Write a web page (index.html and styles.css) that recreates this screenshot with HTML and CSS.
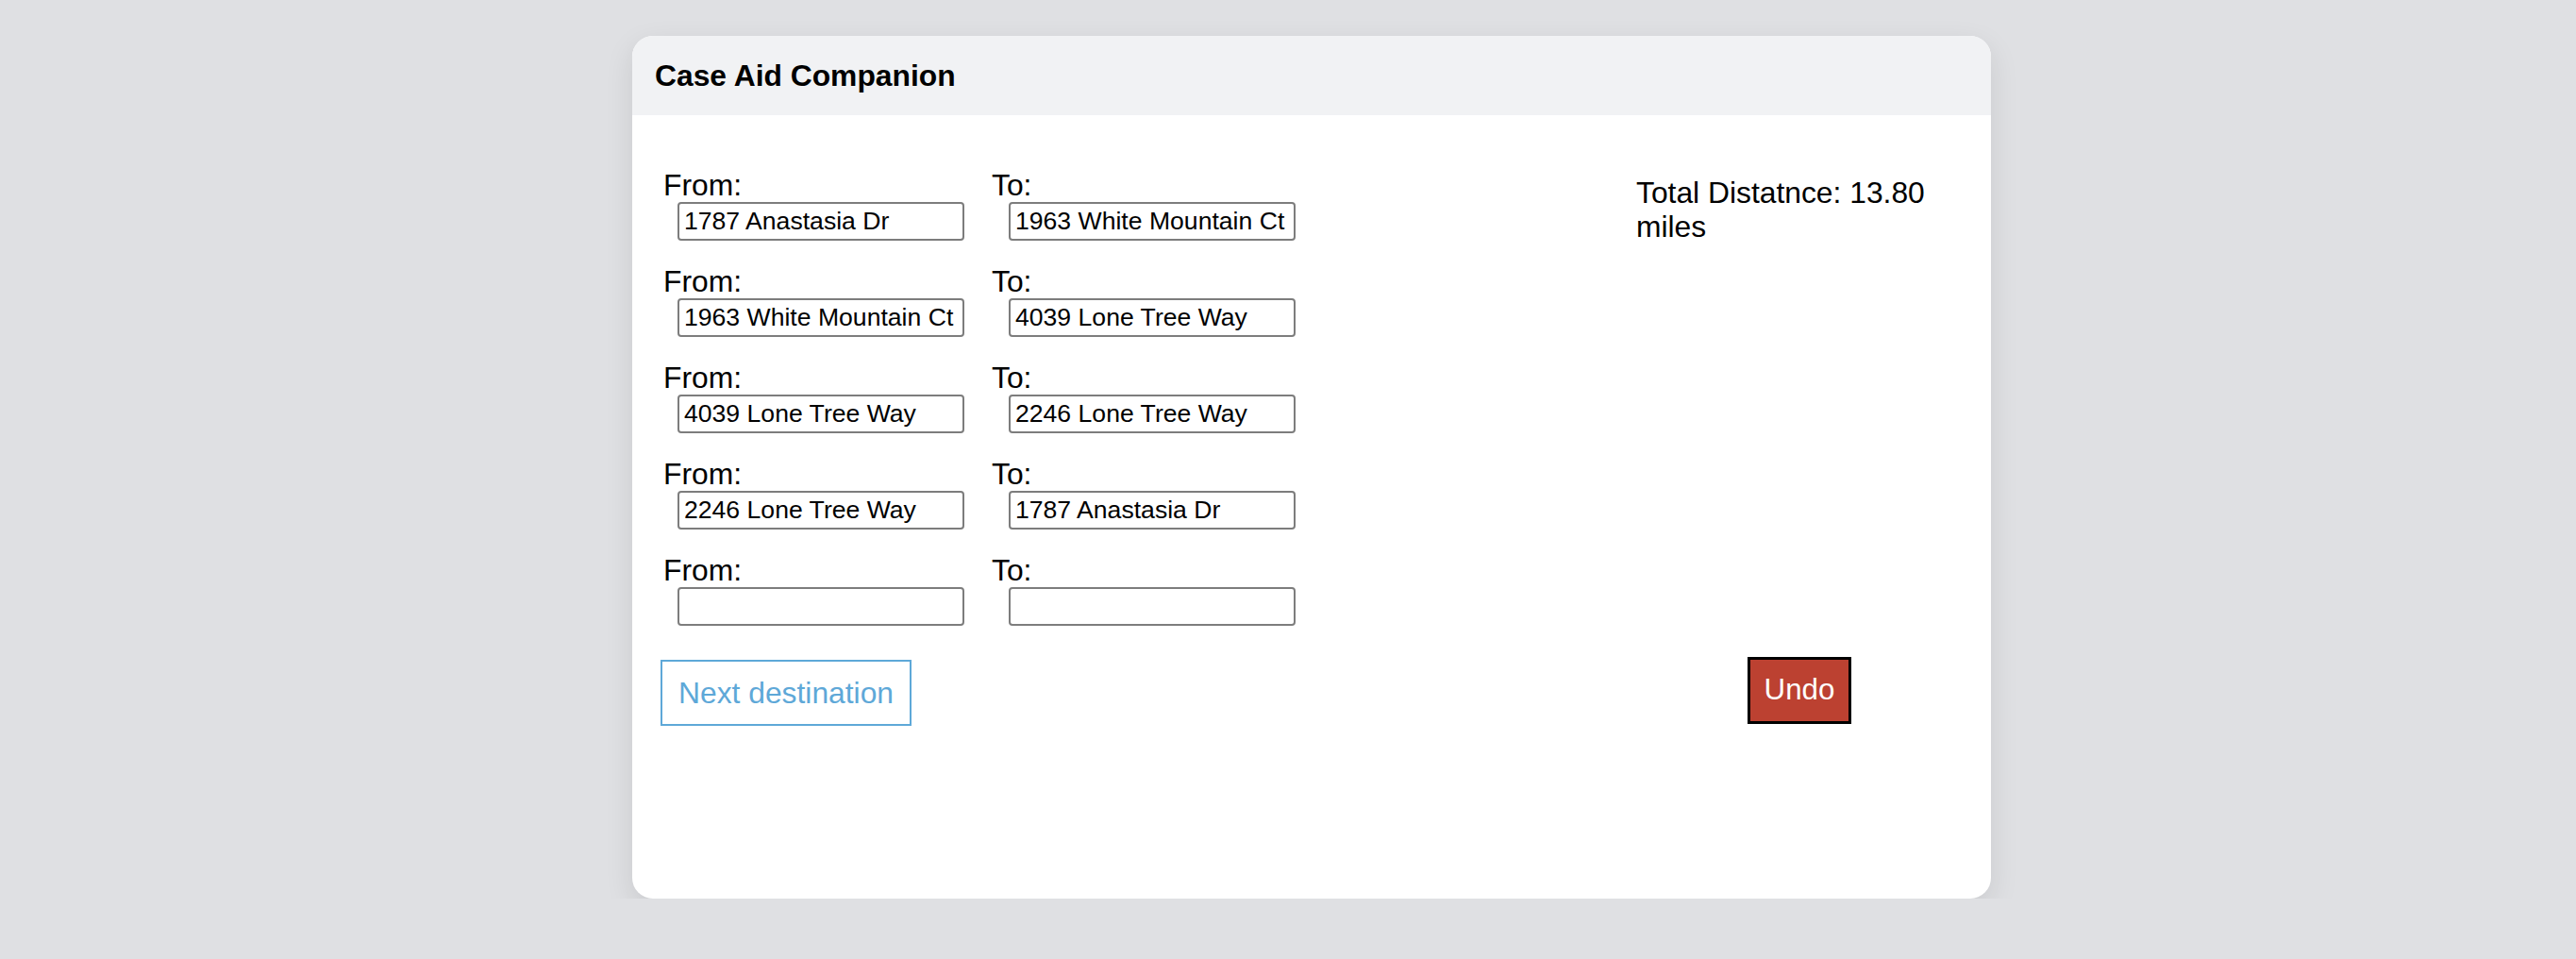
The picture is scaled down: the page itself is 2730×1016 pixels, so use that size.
FILE: index.html
```html
<!DOCTYPE html>
<html lang="en">
<head>
<meta charset="utf-8">
<title>Case Aid Companion</title>
<link rel="stylesheet" href="styles.css">
</head>
<body>
<div class="page">
  <div class="card">
    <div class="card-header">Case Aid Companion</div>
    <div class="card-body">
      <div class="trips">
        <div class="trip">
          <div class="field"><label class="label label-from">From:</label><input class="addr" type="text" value="1787 Anastasia Dr"></div>
          <div class="field"><label class="label">To:</label><input class="addr" type="text" value="1963 White Mountain Ct"></div>
        </div>
        <div class="trip">
          <div class="field"><label class="label label-from">From:</label><input class="addr" type="text" value="1963 White Mountain Ct"></div>
          <div class="field"><label class="label">To:</label><input class="addr" type="text" value="4039 Lone Tree Way"></div>
        </div>
        <div class="trip">
          <div class="field"><label class="label label-from">From:</label><input class="addr" type="text" value="4039 Lone Tree Way"></div>
          <div class="field"><label class="label">To:</label><input class="addr" type="text" value="2246 Lone Tree Way"></div>
        </div>
        <div class="trip">
          <div class="field"><label class="label label-from">From:</label><input class="addr" type="text" value="2246 Lone Tree Way"></div>
          <div class="field"><label class="label">To:</label><input class="addr" type="text" value="1787 Anastasia Dr"></div>
        </div>
        <div class="trip">
          <div class="field"><label class="label label-from">From:</label><input class="addr" type="text" value=""></div>
          <div class="field"><label class="label">To:</label><input class="addr" type="text" value=""></div>
        </div>
        <button class="btn-next" type="button">Next destination</button>
      </div>
      <div class="summary">
        <div class="total">Total Distatnce: 13.80 miles</div>
        <button class="btn-undo" type="button">Undo</button>
      </div>
    </div>
  </div>
</div>
</body>
</html>
```

FILE: styles.css
```css
html, body {
  margin: 0;
  padding: 0;
  background: #dfe0e3;
  font-family: "Liberation Sans", Arial, Helvetica, sans-serif;
  color: #000;
}

.page {
  padding: 38px 0 0 670px;
}

.card {
  width: 1440px;
  min-height: 914px;
  background: #fff;
  border-radius: 22px;
  overflow: hidden;
  box-shadow: 0 10px 30px rgba(0, 0, 0, 0.10);
  box-sizing: border-box;
}

.card-header {
  height: 84px;
  background: #f1f2f4;
  padding: 0 24px;
  display: flex;
  align-items: center;
  font-weight: bold;
  font-size: 31.8px;
  line-height: 36px;
}

.card-body {
  display: grid;
  grid-template-columns: 1fr 346px;
  padding: 56px 30px 0 30px;
}

.trips {
  display: flex;
  flex-direction: column;
  gap: 25px;
}

.trip {
  display: flex;
}

.field {
  flex: 0 0 351px;
}

.label {
  display: block;
  font-size: 31.8px;
  line-height: 36px;
}

.label-from {
  padding-left: 3px;
}

.addr {
  display: block;
  box-sizing: border-box;
  margin: 0 0 0 18px;
  width: 304px;
  height: 41px;
  padding: 0 4px 0 5px;
  border: 2px solid #7d7d7d;
  border-radius: 4px;
  font-family: "Liberation Sans", Arial, Helvetica, sans-serif;
  font-size: 26.6px;
  color: #000;
  background: #fff;
}

.btn-next {
  align-self: flex-start;
  margin-top: 11px;
  padding: 15px 17px;
  border: 2px solid #5ea8d8;
  background: #fff;
  color: #5ea8d8;
  font-family: "Liberation Sans", Arial, Helvetica, sans-serif;
  font-size: 31.8px;
  line-height: 36px;
  border-radius: 0;
}

.summary {
  display: flex;
  flex-direction: column;
  justify-content: space-between;
  padding: 8px 0 2px 0;
}

.total {
  font-size: 31.8px;
  line-height: 36px;
}

.btn-undo {
  align-self: center;
  padding: 14px 15px 15px;
  border: 3px solid #000;
  background: #bc4131;
  color: #fff;
  font-family: "Liberation Sans", Arial, Helvetica, sans-serif;
  font-size: 31.3px;
  line-height: 36px;
  border-radius: 0;
}
```
